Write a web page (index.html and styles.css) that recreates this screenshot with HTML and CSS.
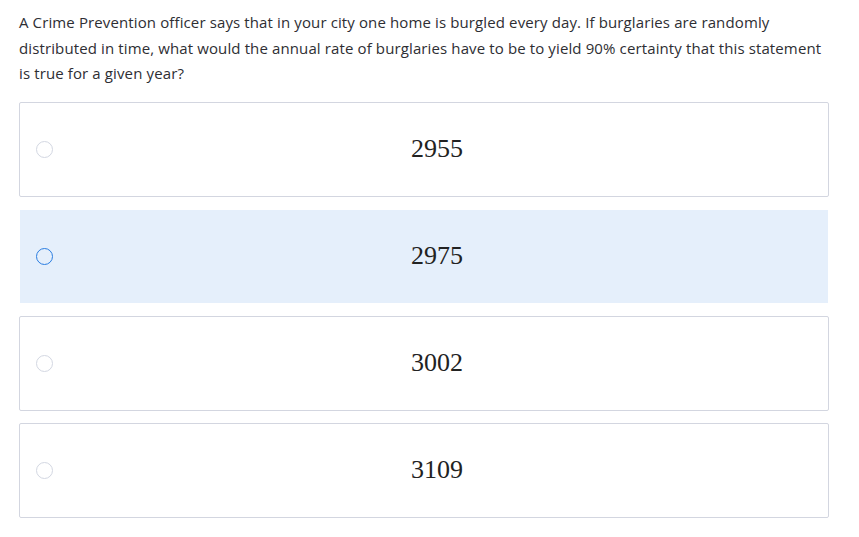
FILE: index.html
```html
<!DOCTYPE html>
<html>
<head>
<meta charset="utf-8">
<link rel="stylesheet" href="styles.css">
</head>
<body>
<div class="page">
  <p class="question">A Crime Prevention officer says that in your city one home is burgled every day. If burglaries are randomly<br>distributed in time, what would the annual rate of burglaries have to be to yield 90% certainty that this statement<br>is true for a given year?</p>
  <div class="options">
    <label class="option"><span class="radio"></span><span class="value">2955</span></label>
    <label class="option selected"><span class="radio"></span><span class="value">2975</span></label>
    <label class="option"><span class="radio"></span><span class="value">3002</span></label>
    <label class="option"><span class="radio"></span><span class="value">3109</span></label>
  </div>
</div>
</body>
</html>
```
FILE: styles.css
```css
html, body { margin: 0; padding: 0; background: #fff; }
.page {
  padding: 10px 30px 0 19px;
  font-family: "Open Sans", "Liberation Sans", sans-serif;
  color: #2e2e33;
}
.question {
  margin: 0;
  font-size: 15px;
  line-height: 25.5px;
  letter-spacing: 0.12px;
  width: 840px;
  white-space: nowrap;
}
.options {
  margin-top: 15px;
  display: flex;
  flex-direction: column;
  gap: 12px;
  width: 810px;
}
.option {
  box-sizing: border-box;
  height: 95px;
  border: 1px solid #d3d6e0;
  border-radius: 2px;
  display: flex;
  align-items: center;
  padding-left: 16px;
  background: #fff;
}
.option.selected {
  background: #e5effb;
  background-clip: padding-box;
  border-color: transparent;
  border-radius: 0;
}
.radio {
  box-sizing: border-box;
  width: 17px;
  height: 17px;
  border-radius: 50%;
  border: 1px solid #d3d7e2;
  flex: none;
}
.selected .radio {
  border: 1.5px solid #2a7de1;
}
.value {
  flex: 1;
  text-align: center;
  font-family: "Liberation Serif", "DejaVu Serif", serif;
  font-size: 26px;
  color: #222;
  padding-right: 7px;
}
```
